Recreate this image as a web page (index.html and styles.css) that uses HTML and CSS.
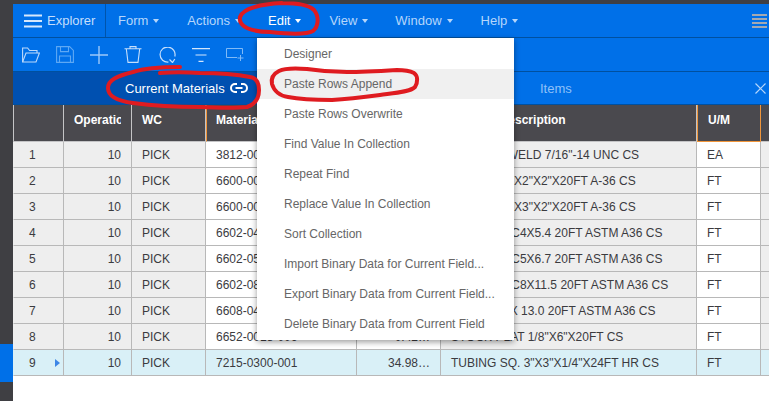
FILE: index.html
```html
<!DOCTYPE html>
<html lang="en">
<head>
    <meta charset="UTF-8" />
    <title>Current Materials</title>
    <link rel="stylesheet" href="styles.css">
</head>
<body>
    <div class="topstrip"></div>
    <div class="shell">
        <div class="sidebar"><div class="sidebar-mark"></div></div>
        <div class="main">
            <div class="menubar">
                <div class="explorer">
                    <svg class="burger" width="18" height="14" viewBox="0 0 18 14"><path d="M0 1.500h18M0 7h18M0 12.500h18" stroke="#d6e8fc" stroke-width="2" fill="none"/></svg>
                    <span>Explorer</span>
                </div>
                <ul class="menus">
                    <li class="m-form">Form<i class="caret"></i></li>
                    <li class="m-actions">Actions<i class="caret"></i></li>
                    <li class="m-edit active">Edit<i class="caret"></i></li>
                    <li class="m-view">View<i class="caret"></i></li>
                    <li class="m-window">Window<i class="caret"></i></li>
                    <li class="m-help">Help<i class="caret"></i></li>
                </ul>
                <svg class="more" width="15" height="14" viewBox="0 0 15 14"><path d="M0 1h15M0 5h15M0 9h15M0 13h15" stroke="#a3a9b2" stroke-width="2" fill="none"/></svg>
            </div>
            <div class="toolbar">
                <svg width="18" height="16" viewBox="0 0 18 16" fill="none" stroke="#bcd9fb" stroke-width="1.100"><path d="M.6 15V1h5l2 2.500h7.400V6"/><path d="M.6 15h13.400l3.400-9H4z"/></svg>
                <svg width="18" height="17" viewBox="0 0 18 17" fill="none" stroke="#5ea8f4" stroke-width="1.100"><path d="M.6.6h13l3.800 3.800v12H.6z"/><path d="M4.500.6v5h8v-5M3.500 16.400v-6.400h11v6.400"/></svg>
                <svg width="18" height="18" viewBox="0 0 18 18" fill="none" stroke="#9cc8f9" stroke-width="1.400"><path d="M9 0v18M0 9h18"/></svg>
                <svg width="18" height="17" viewBox="0 0 18 17" fill="none" stroke="#c6dffc" stroke-width="1.100"><path d="M.5 2.800h17M2.300 2.800l1.700 13.600h10l1.700-13.600M6 2.800V.6h6v2.200"/></svg>
                <svg width="18" height="16" viewBox="0 0 18 16" fill="none" stroke="#c6dffc" stroke-width="1.200"><path d="M10.500 15A7.500 7.500 0 1 1 16.800 9.500"/><path d="M11.500 12.500l3 3 2.300-3.500"/></svg>
                <svg width="18" height="14" viewBox="0 0 18 14" fill="none" stroke="#d3e6fc" stroke-width="1.100"><path d="M0 .6h18M3.500 7h11M6.500 13.400h5"/></svg>
                <svg width="18" height="13" viewBox="0 0 18 13" fill="none" stroke="#80baf7" stroke-width="1"><path d="M11 9.500H.5V.5h16V6"/><path d="M14.500 7v6M11.500 10h6"/></svg>
            </div>
            <div class="tabs">
                <div class="tab tab-current">Current Materials
                    <svg width="18" height="10" viewBox="0 0 18 10" fill="none" stroke="#fff" stroke-width="2"><path d="M7 1H5a4 4 0 0 0 0 8h2M11 1h2a4 4 0 0 1 0 8h-2M5.500 5h7"/></svg>
                </div>
                <div class="tab tab-items">Items</div>
                <svg class="tab-close" width="11" height="11" viewBox="0 0 11 11" fill="none" stroke="#b5d6fb" stroke-width="1.200"><path d="M.5.5l10 10M10.500.5l-10 10"/></svg>
            </div>
            <table class="grid">
                <colgroup>
                    <col class="c-num"><col class="c-op"><col class="c-wc"><col class="c-mat"><col class="c-qty"><col class="c-desc"><col class="c-um"><col>
                </colgroup>
                <thead>
                    <tr>
                        <th></th>
                        <th><div class="clip">Operation</div></th>
                        <th>WC</th>
                        <th class="hl-left"><div class="clip">Material</div></th>
                        <th>Qty</th>
                        <th>Material Description</th>
                        <th class="hl-box">U/M</th>
                        <th></th>
                    </tr>
                </thead>
                <tbody>
                    <tr><td class="num">1</td><td class="r">10</td><td>PICK</td><td class="w">3812-0000-001</td><td class="r w">1.00</td><td>HEX NUT WELD 7/16"-14 UNC CS</td><td class="w">EA</td><td></td></tr>
                    <tr><td class="num">2</td><td class="r">10</td><td>PICK</td><td class="w">6600-0000-002</td><td class="r w">1.00</td><td>ANGLES 2"X2"X2"X20FT A-36 CS</td><td class="w">FT</td><td></td></tr>
                    <tr><td class="num">3</td><td class="r">10</td><td>PICK</td><td class="w">6600-0000-003</td><td class="r w">1.00</td><td>ANGLES 3"X3"X2"X20FT A-36 CS</td><td class="w">FT</td><td></td></tr>
                    <tr><td class="num">4</td><td class="r">10</td><td>PICK</td><td class="w">6602-0400-001</td><td class="r w">1.00</td><td>CHANNEL C4X5.4 20FT ASTM A36 CS</td><td class="w">FT</td><td></td></tr>
                    <tr><td class="num">5</td><td class="r">10</td><td>PICK</td><td class="w">6602-0500-001</td><td class="r w">1.00</td><td>CHANNEL C5X6.7 20FT ASTM A36 CS</td><td class="w">FT</td><td></td></tr>
                    <tr><td class="num">6</td><td class="r">10</td><td>PICK</td><td class="w">6602-0800-001</td><td class="r w">1.00</td><td>CHANNEL C8X11.5 20FT ASTM A36 CS</td><td class="w">FT</td><td></td></tr>
                    <tr><td class="num">7</td><td class="r">10</td><td>PICK</td><td class="w">6608-0400-001</td><td class="r w">1.00</td><td>BEAM W4 X 13.0 20FT ASTM A36 CS</td><td class="w">FT</td><td></td></tr>
                    <tr><td class="num">8</td><td class="r">10</td><td>PICK</td><td class="w">6652-0018-006</td><td class="r w">0.42…</td><td>STOCK PLAT 1/8"X6"X20FT CS</td><td class="w">FT</td><td></td></tr>
                    <tr class="current"><td class="num">9<i class="pointer"></i></td><td class="r">10</td><td>PICK</td><td>7215-0300-001</td><td class="r">34.98…</td><td>TUBING SQ. 3"X3"X1/4"X24FT HR CS</td><td>FT</td><td></td></tr>
                </tbody>
            </table>
        </div>
    </div>

    <ul class="dropdown">
        <li>Designer</li>
        <li class="hover">Paste Rows Append</li>
        <li>Paste Rows Overwrite</li>
        <li>Find Value In Collection</li>
        <li>Repeat Find</li>
        <li>Replace Value In Collection</li>
        <li>Sort Collection</li>
        <li>Import Binary Data for Current Field...</li>
        <li>Export Binary Data from Current Field...</li>
        <li>Delete Binary Data from Current Field</li>
    </ul>

    <svg class="scribble" width="769" height="401" viewBox="0 0 769 401" fill="none" stroke="#df1b20" stroke-width="4" stroke-linecap="round" stroke-linejoin="round">
        <path d="M282 3C262 4 243 8 240 17C238 27 252 32 270 32C288 34 306 35 313 31C319 26 319 16 314 10C308 4 295 3 282 3"/>
        <path d="M180 67C160 67 145 68 133 72C117 76 108 80 108 88C108 97 118 101 133 103C155 106 178 107 200 107C220 108 238 108 247 107C256 104 259 97 259 90C259 83 256 78 250 77C235 74 218 73 200 73C185 72 172 72 160 73"/>
        <path d="M307 69C295 68 285 68 279 71C273 74 271 79 272 84C274 91 280 96 288 97C303 100 318 100 332 100C350 99 365 97 380 95C395 93 410 92 415 87C418 82 418 76 414 73C408 70 402 70 397 70C380 71 362 72 347 72C333 72 320 71 307 69"/>
    </svg>
</body>
</html>
```

FILE: styles.css
```css
*{
    margin: 0;
    padding: 0;
    box-sizing: border-box;
}
html,body{
    width: 100%;
    height: 100%;
    overflow: hidden;
}
body{
    position: relative;
    display: flex;
    flex-direction: column;
    font-family: "Liberation Sans", Arial, sans-serif;
    font-size: 12px;
    background: #fff;
}
ul{
    list-style: none;
}
.topstrip{
    height: 4px;
    background: #3f3f43;
}
.shell{
    flex: 1;
    display: flex;
    min-height: 0;
}
.sidebar{
    width: 13px;
    padding-top: 340px;
    background: #3f3f43;
}
.sidebar-mark{
    height: 38px;
    background: #0070e8;
}
.main{
    flex: 1;
    min-width: 0;
}

/* menu bar */
.menubar{
    height: 34px;
    display: flex;
    align-items: center;
    background: #0070e8;
    border-bottom: 1px solid #00509f;
    color: #b5d6fb;
    font-size: 13px;
}
.explorer{
    width: 93px;
    height: 33px;
    display: flex;
    align-items: center;
    gap: 5px;
    padding-left: 11px;
    border-right: 1px solid #0054ab;
    color: #c4defc;
}
.burger{
    flex: none;
}
.menus{
    display: flex;
    align-items: center;
}
.menus li{
    display: flex;
    align-items: center;
    gap: 5px;
}
.menus li.active{
    color: #fff;
}
.m-form{ margin-left: 12px; }
.m-actions{ margin-left: 28px; }
.m-edit{ margin-left: 27px; }
.m-view{ margin-left: 28px; }
.m-window{ margin-left: 27px; }
.m-help{ margin-left: 28px; }
.caret{
    width: 0;
    height: 0;
    border-left: 3.500px solid transparent;
    border-right: 3.500px solid transparent;
    border-top: 4px solid currentColor;
}
.more{
    margin-left: auto;
    margin-right: 2px;
}

/* toolbar */
.toolbar{
    height: 34px;
    display: flex;
    align-items: center;
    gap: 16px;
    padding-left: 9px;
    background: #0070e8;
    border-bottom: 1px solid #00509f;
}

/* tabs */
.tabs{
    position: relative;
    height: 33px;
    display: flex;
    background: #0070e8;
    border-bottom: 1px solid #00509f;
}
.tab{
    display: flex;
    align-items: center;
    gap: 5px;
    height: 32px;
    flex: none;
    font-size: 13px;
}
.tab-current{
    width: 245px;
    padding-left: 112px;
    background: #0050b0;
    color: #fff;
}
.tab-items{
    flex: 1;
    padding-left: 282px;
    color: #8fc1f8;
}
.tab-close{
    position: absolute;
    right: 3px;
    top: 11px;
}

/* grid */
.grid{
    width: 756px;
    table-layout: fixed;
    border-collapse: separate;
    border-spacing: 0;
    color: #3b3b3f;
}
.c-num{ width: 51px; }
.c-op{ width: 68px; }
.c-wc{ width: 74px; }
.c-mat{ width: 151px; }
.c-qty{ width: 84px; }
.c-desc{ width: 256px; }
.c-um{ width: 64px; }
.grid th{
    height: 37px;
    padding: 0 10px 6px;
    text-align: left;
    vertical-align: middle;
    background: #4a494e;
    color: #fff;
    font-size: 12px;
    border-right: 1px solid #c4c4c6;
    border-bottom: 1px solid #c4c4c6;
    white-space: nowrap;
    overflow: hidden;
}
.grid th:first-child{
    border-left: 1px solid #c4c4c6;
}
.grid th:last-child{
    border-right: 0;
}
.grid th .clip{
    overflow: hidden;
}
.grid th.hl-left{
    border-left: 1px solid #f0953a;
    padding-left: 9px;
}
.grid th.hl-box{
    border-left: 1px solid #f0953a;
    border-right: 1px solid #f0953a;
    border-bottom: 1px solid #f0953a;
}
.grid td{
    height: 26px;
    padding: 0 10px;
    background: #eeeeee;
    border-right: 1px solid #b8b8b8;
    border-bottom: 1px solid #b8b8b8;
    white-space: nowrap;
    overflow: hidden;
}
.grid td:last-child{
    border-right: 0;
}
.grid td.w{
    background: #fff;
}
.grid td.r{
    text-align: right;
}
.grid td.num{
    position: relative;
    padding-left: 15px;
    border-left: 1px solid #eeeeee;
}
.grid .current td{
    background: #d9f0f7;
    border-left-color: #d9f0f7;
}
.pointer{
    position: absolute;
    right: 3px;
    top: 9px;
    width: 0;
    height: 0;
    border-top: 4.500px solid transparent;
    border-bottom: 4.500px solid transparent;
    border-left: 5px solid #3d86e6;
}

/* edit menu, lies over the grid */
.dropdown{
    position: absolute;
    left: 257px;
    top: 38px;
    width: 257px;
    height: 302px;
    padding-top: 1px;
    background: #fff;
    color: #666;
    box-shadow: 0 2px 6px rgba(0,0,0,.4);
}
.dropdown li{
    height: 30px;
    line-height: 30px;
    padding-left: 27px;
    font-size: 12px;
}
.dropdown li.hover{
    background: #f0f0f0;
}

/* red marker annotations */
.scribble{
    position: absolute;
    left: 0;
    top: 0;
    pointer-events: none;
}
```
